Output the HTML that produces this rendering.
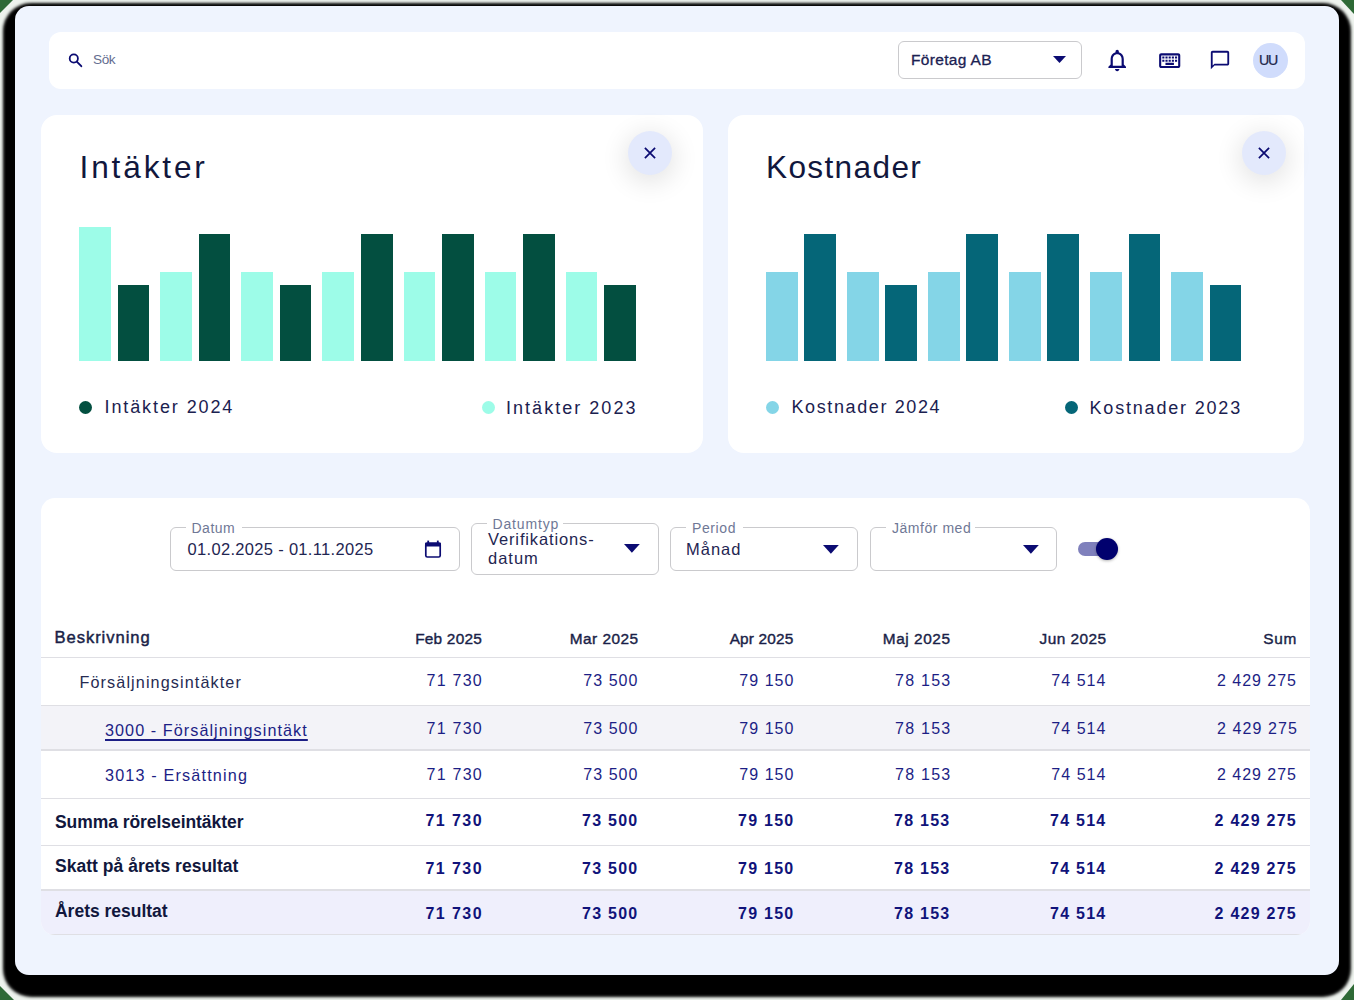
<!DOCTYPE html>
<html><head><meta charset="utf-8"><title>Dashboard</title>
<style>
html,body{margin:0;padding:0;width:1354px;height:1000px;overflow:hidden;background:#eef3ee;}
body{position:relative;font-family:"Liberation Sans",sans-serif;}
.abs{position:absolute;}
.tx{position:absolute;line-height:1;white-space:nowrap;}
#shadow{position:absolute;left:17px;top:8px;width:1320px;height:966px;border-radius:14px;background:#000;box-shadow:0 9px 3px 14px #000;}
#frame{position:absolute;left:15px;top:6px;width:1324px;height:969px;border-radius:14px;background:#eff4fe;}
.card{position:absolute;background:#fff;}
#search{left:49px;top:32px;width:1256px;height:57px;border-radius:12px;}
#card1{left:41px;top:114.5px;width:661.5px;height:338px;border-radius:16px;}
#card2{left:728px;top:114.5px;width:575.5px;height:338px;border-radius:16px;}
#card3{left:41px;top:497.5px;width:1268.5px;height:437px;border-radius:14px;overflow:hidden;}
.bar{position:absolute;}
.g1{background:#9dfce8;}
.g2{background:#034f40;}
.b1{background:#84d5e7;}
.b2{background:#056678;}
.dot{position:absolute;width:13px;height:13px;border-radius:50%;}
.closebtn{position:absolute;width:44px;height:44px;border-radius:50%;background:#e3e9fc;box-shadow:0 5px 26px 3px rgba(0,0,0,0.11);}
.field{position:absolute;border:1.5px solid #cacacd;border-radius:6px;box-sizing:border-box;}
.lblgap{position:absolute;background:#fff;height:4px;}
.row{position:absolute;left:0;width:100%;}
.div{position:absolute;left:0;width:100%;height:1.3px;background:#dfdfe4;}
</style></head>
<body>
<svg class="abs" style="left:0;top:0" width="1354" height="1000">
<polygon points="0,0 13,0 0,13" fill="#2e6a36"/>
<polygon points="1341,0 1354,0 1354,14" fill="#2e6a36"/>
<polygon points="0,986 0,1000 14,1000" fill="#2e6a36"/>
<polygon points="1354,984 1354,1000 1341,1000" fill="#2e6a36"/>
</svg>
<div id="shadow"></div>
<div id="frame"></div>
<div class="card" id="search"></div>
<div class="card" id="card1"></div>
<div class="card" id="card2"></div>
<div class="card" id="card3">
<div class="row" style="top:207.7px;height:44.4px;background:#f3f3f8"></div>
<div class="row" style="top:392.1px;height:44.6px;background:#efeffc"></div>
<div class="div" style="top:159.7px"></div>
<div class="div" style="top:207.5px"></div>
<div class="div" style="top:251.9px"></div>
<div class="div" style="top:300.0px"></div>
<div class="div" style="top:347.4px"></div>
<div class="div" style="top:391.8px"></div>
<div class="div" style="top:436.3px"></div>
</div>
<div class="bar g1" style="left:79.30px;top:227px;width:31.8px;height:133.8px"></div>
<div class="bar g2" style="left:117.60px;top:284.7px;width:31.8px;height:76.1px"></div>
<div class="bar g1" style="left:160.35px;top:272px;width:31.8px;height:88.8px"></div>
<div class="bar g2" style="left:198.65px;top:233.7px;width:31.8px;height:127.1px"></div>
<div class="bar g1" style="left:241.40px;top:272px;width:31.8px;height:88.8px"></div>
<div class="bar g2" style="left:279.70px;top:284.7px;width:31.8px;height:76.1px"></div>
<div class="bar g1" style="left:322.45px;top:272px;width:31.8px;height:88.8px"></div>
<div class="bar g2" style="left:360.75px;top:233.7px;width:31.8px;height:127.1px"></div>
<div class="bar g1" style="left:403.50px;top:272px;width:31.8px;height:88.8px"></div>
<div class="bar g2" style="left:441.80px;top:233.7px;width:31.8px;height:127.1px"></div>
<div class="bar g1" style="left:484.55px;top:272px;width:31.8px;height:88.8px"></div>
<div class="bar g2" style="left:522.85px;top:233.7px;width:31.8px;height:127.1px"></div>
<div class="bar g1" style="left:565.60px;top:272px;width:31.8px;height:88.8px"></div>
<div class="bar g2" style="left:603.90px;top:284.7px;width:31.8px;height:76.1px"></div>
<div class="bar b1" style="left:766.00px;top:272px;width:31.8px;height:88.8px"></div>
<div class="bar b2" style="left:804.30px;top:233.7px;width:31.8px;height:127.1px"></div>
<div class="bar b1" style="left:847.05px;top:272px;width:31.8px;height:88.8px"></div>
<div class="bar b2" style="left:885.35px;top:284.7px;width:31.8px;height:76.1px"></div>
<div class="bar b1" style="left:928.10px;top:272px;width:31.8px;height:88.8px"></div>
<div class="bar b2" style="left:966.40px;top:233.7px;width:31.8px;height:127.1px"></div>
<div class="bar b1" style="left:1009.15px;top:272px;width:31.8px;height:88.8px"></div>
<div class="bar b2" style="left:1047.45px;top:233.7px;width:31.8px;height:127.1px"></div>
<div class="bar b1" style="left:1090.20px;top:272px;width:31.8px;height:88.8px"></div>
<div class="bar b2" style="left:1128.50px;top:233.7px;width:31.8px;height:127.1px"></div>
<div class="bar b1" style="left:1171.25px;top:272px;width:31.8px;height:88.8px"></div>
<div class="bar b2" style="left:1209.55px;top:284.7px;width:31.8px;height:76.1px"></div>
<div class="dot" style="left:79.3px;top:400.7px;background:#034f40"></div>
<div class="dot" style="left:481.6px;top:400.7px;background:#9dfce8"></div>
<div class="dot" style="left:766px;top:400.7px;background:#84d5e7"></div>
<div class="dot" style="left:1065px;top:400.7px;background:#056678"></div>
<svg class="abs" style="left:60px;top:48px" width="30" height="24" viewBox="60 48 30 24"><circle cx="73.8" cy="58.5" r="4.1" fill="none" stroke="#0b0b72" stroke-width="1.8"/><line x1="76.8" y1="61.6" x2="81.3" y2="66.2" stroke="#0b0b72" stroke-width="1.9" stroke-linecap="round"/></svg>
<div class="field" style="left:898.4px;top:41.2px;width:183.6px;height:38.1px;"></div>
<svg class="abs" style="left:1050px;top:53px" width="20" height="14" viewBox="1050 53 20 14"><polygon points="1053,56 1066,56 1059.5,63" fill="#0b0b72"/></svg>
<svg class="abs" style="left:1103.9px;top:47.3px" width="26.4" height="26.4" viewBox="0 0 24 24"><path fill="#0b0b72" d="M12 22c1.1 0 2-.9 2-2h-4c0 1.1.89 2 2 2zm6-6v-5c0-3.07-1.64-5.64-4.5-6.32V4c0-.83-.67-1.5-1.5-1.5s-1.5.67-1.5 1.5v.68C7.63 5.36 6 7.92 6 11v5l-2 2v1h16v-1l-2-2zm-2 1H8v-6c0-2.48 1.51-4.5 4-4.5s4 2.02 4 4.5v6z"/></svg>
<svg class="abs" style="left:1156.7px;top:47.7px" width="25.4" height="25.4" viewBox="0 0 24 24"><path fill="#0b0b72" d="M20 7v10H4V7h16m0-2H4c-1.1 0-1.99.9-1.99 2L2 17c0 1.1.9 2 2 2h16c1.1 0 2-.9 2-2V7c0-1.1-.9-2-2-2zm-9 3h2v2h-2zm0 3h2v2h-2zM8 8h2v2H8zm0 3h2v2H8zm-3 0h2v2H5zm0-3h2v2H5zm3 6h8v2H8zm6-3h2v2h-2zm0-3h2v2h-2zm3 3h2v2h-2zm0-3h2v2h-2z"/></svg>
<svg class="abs" style="left:1208.7px;top:49.3px" width="22" height="22" viewBox="0 0 24 24"><path fill="#0b0b72" d="M20 2H4c-1.1 0-2 .9-2 2v18l4-4h14c1.1 0 2-.9 2-2V4c0-1.1-.9-2-2-2zm0 14H6l-2 2V4h16v12z"/></svg>
<div class="abs" style="left:1252.5px;top:42.7px;width:35px;height:35px;border-radius:50%;background:#d0dcfc"></div>
<div class="closebtn" style="left:628px;top:130.5px"></div>
<svg class="abs" style="left:642px;top:144.5px" width="16" height="16" viewBox="0 0 16 16"><path d="M2.9 2.9L13.1 13.1M13.1 2.9L2.9 13.1" stroke="#0b0b72" stroke-width="1.75"/></svg>
<div class="closebtn" style="left:1241.5px;top:130.5px"></div>
<svg class="abs" style="left:1255.5px;top:144.5px" width="16" height="16" viewBox="0 0 16 16"><path d="M2.9 2.9L13.1 13.1M13.1 2.9L2.9 13.1" stroke="#0b0b72" stroke-width="1.75"/></svg>
<div class="field" style="left:170.2px;top:527.2px;width:289.6px;height:43.6px;"></div>
<div class="lblgap" style="left:186.2px;top:526.2px;width:55.70000000000002px"></div>
<div class="field" style="left:471.3px;top:523.3px;width:187.3px;height:51.8px;"></div>
<div class="lblgap" style="left:487px;top:522.3px;width:76px"></div>
<div class="field" style="left:670.3px;top:527.2px;width:187.4px;height:43.4px;"></div>
<div class="lblgap" style="left:686px;top:526.2px;width:57px"></div>
<div class="field" style="left:869.5px;top:527.2px;width:187.6px;height:43.9px;"></div>
<div class="lblgap" style="left:886px;top:526.2px;width:89px"></div>
<svg class="abs" style="left:420px;top:536px" width="26" height="26" viewBox="420 536 26 26"><rect x="425.8" y="543.3" width="14.4" height="13.7" rx="1.5" fill="none" stroke="#0b0b72" stroke-width="1.7"/><rect x="425" y="542.5" width="16" height="4" rx="1" fill="#0b0b72"/><rect x="427.3" y="540.6" width="1.8" height="3" fill="#0b0b72"/><rect x="436.9" y="540.6" width="1.8" height="3" fill="#0b0b72"/></svg>
<svg class="abs" style="left:622.4px;top:541.8px" width="20" height="13" viewBox="622.4 541.8 20 13"><polygon points="624.4,543.8 640.1999999999999,543.8 632.3,552.5999999999999" fill="#0b0b72"/></svg>
<svg class="abs" style="left:821.4px;top:543px" width="20" height="13" viewBox="821.4 543 20 13"><polygon points="823.4,545 839.1999999999999,545 831.3,553.8" fill="#0b0b72"/></svg>
<svg class="abs" style="left:1020.7px;top:543px" width="20" height="13" viewBox="1020.7 543 20 13"><polygon points="1022.7,545 1038.5,545 1030.6000000000001,553.8" fill="#0b0b72"/></svg>
<div class="abs" style="left:1078.2px;top:542.2px;width:36px;height:13.7px;border-radius:7px;background:#7f80bc"></div>
<div class="abs" style="left:1096px;top:538.2px;width:22px;height:22px;border-radius:50%;background:#01016e;box-shadow:0 1px 3px rgba(0,0,0,0.3)"></div>
<div class="tx" id="sok" style="left:93.00px;top:53.49px;font-size:13.6px;font-weight:400;color:#646d90;letter-spacing:-0.400px;">Sök</div>
<div class="tx" id="foretag" style="left:911.00px;top:52.18px;font-size:15.5px;font-weight:400;color:#1b2152;letter-spacing:0.333px;-webkit-text-stroke:0.3px #1b2152;">Företag AB</div>
<div class="tx" id="uu" style="left:1259.00px;top:53.08px;font-size:14.2px;font-weight:400;color:#1b1f4a;letter-spacing:-1.200px;-webkit-text-stroke:0.2px #1b1f4a;">UU</div>
<div class="tx" id="tit1" style="left:79.50px;top:151.65px;font-size:31.6px;font-weight:400;color:#11173d;letter-spacing:2.857px;">Intäkter</div>
<div class="tx" id="tit2" style="left:766.00px;top:151.65px;font-size:31.6px;font-weight:400;color:#11173d;letter-spacing:1.350px;">Kostnader</div>
<div class="tx" id="lg1" style="left:104.50px;top:398.26px;font-size:18px;font-weight:400;color:#1b2150;letter-spacing:1.900px;">Intäkter 2024</div>
<div class="tx" id="lg2" style="left:506.00px;top:398.76px;font-size:18px;font-weight:400;color:#1b2150;letter-spacing:2.033px;">Intäkter 2023</div>
<div class="tx" id="lg3" style="left:791.50px;top:398.26px;font-size:18px;font-weight:400;color:#1b2150;letter-spacing:1.615px;">Kostnader 2024</div>
<div class="tx" id="lg4" style="left:1089.50px;top:398.76px;font-size:18px;font-weight:400;color:#1b2150;letter-spacing:1.815px;">Kostnader 2023</div>
<div class="tx" id="f1l" style="left:191.50px;top:520.75px;font-size:14px;font-weight:400;color:#6f7896;letter-spacing:0.500px;">Datum</div>
<div class="tx" id="f1v" style="left:187.50px;top:540.63px;font-size:16.5px;font-weight:400;color:#1f2652;letter-spacing:0.318px;">01.02.2025 - 01.11.2025</div>
<div class="tx" id="f2l" style="left:492.50px;top:516.75px;font-size:14px;font-weight:400;color:#6f7896;letter-spacing:0.857px;">Datumtyp</div>
<div class="tx" id="f2v1" style="left:488.00px;top:531.03px;font-size:16.5px;font-weight:400;color:#1f2652;letter-spacing:0.862px;">Verifikations-</div>
<div class="tx" id="f2v2" style="left:488.00px;top:550.43px;font-size:16.5px;font-weight:400;color:#1f2652;letter-spacing:1.000px;">datum</div>
<div class="tx" id="f3l" style="left:692.00px;top:520.75px;font-size:14px;font-weight:400;color:#6f7896;letter-spacing:0.600px;">Period</div>
<div class="tx" id="f3v" style="left:686.00px;top:540.63px;font-size:16.5px;font-weight:400;color:#1f2652;letter-spacing:1.000px;">Månad</div>
<div class="tx" id="f4l" style="left:892.00px;top:520.65px;font-size:14px;font-weight:400;color:#6f7896;letter-spacing:0.533px;">Jämför med</div>
<div class="tx" id="th0" style="left:54.50px;top:629.95px;font-size:16.6px;font-weight:400;color:#1a1f48;letter-spacing:0.940px;-webkit-text-stroke:0.45px #1a1f48;">Beskrivning</div>
<div class="tx" id="th1" style="right:872.00px;top:630.96px;font-size:15.4px;font-weight:400;color:#1a1f48;letter-spacing:0.229px;-webkit-text-stroke:0.4px #1a1f48;">Feb 2025</div>
<div class="tx" id="th2" style="right:715.50px;top:630.96px;font-size:15.4px;font-weight:400;color:#1a1f48;letter-spacing:0.457px;-webkit-text-stroke:0.4px #1a1f48;">Mar 2025</div>
<div class="tx" id="th3" style="right:560.50px;top:630.96px;font-size:15.4px;font-weight:400;color:#1a1f48;letter-spacing:0.171px;-webkit-text-stroke:0.4px #1a1f48;">Apr 2025</div>
<div class="tx" id="th4" style="right:403.50px;top:630.96px;font-size:15.4px;font-weight:400;color:#1a1f48;letter-spacing:0.543px;-webkit-text-stroke:0.4px #1a1f48;">Maj 2025</div>
<div class="tx" id="th5" style="right:247.50px;top:630.96px;font-size:15.4px;font-weight:400;color:#1a1f48;letter-spacing:0.457px;-webkit-text-stroke:0.4px #1a1f48;">Jun 2025</div>
<div class="tx" id="th6" style="right:57.00px;top:630.96px;font-size:15.4px;font-weight:400;color:#1a1f48;letter-spacing:0.700px;-webkit-text-stroke:0.4px #1a1f48;">Sum</div>
<div class="tx" id="r1l" style="left:79.50px;top:674.49px;font-size:16.2px;font-weight:400;color:#262b52;letter-spacing:1.105px;">Försäljningsintäkter</div>
<div class="tx" id="r2l" style="left:105.00px;top:722.39px;font-size:16.2px;font-weight:400;color:#1c1e85;letter-spacing:1.058px;text-decoration:underline;text-decoration-thickness:1.5px;text-underline-offset:3px;">3000 - Försäljningsintäkt</div>
<div class="tx" id="r3l" style="left:105.00px;top:766.89px;font-size:16.2px;font-weight:400;color:#1c1e85;letter-spacing:1.163px;">3013 - Ersättning</div>
<div class="tx" id="r4l" style="left:55.00px;top:813.79px;font-size:17.5px;font-weight:700;color:#11173d;letter-spacing:-0.060px;">Summa rörelseintäkter</div>
<div class="tx" id="r5l" style="left:55.00px;top:858.19px;font-size:17.5px;font-weight:700;color:#11173d;letter-spacing:0.027px;">Skatt på årets resultat</div>
<div class="tx" id="r6l" style="left:55.00px;top:902.69px;font-size:17.5px;font-weight:700;color:#11173d;letter-spacing:-0.015px;">Årets resultat</div>
<div class="tx" id="n0_0" style="right:871.00px;top:673.46px;font-size:16px;font-weight:400;color:#1c1e85;letter-spacing:1.240px;">71 730</div>
<div class="tx" id="n0_1" style="right:715.50px;top:673.46px;font-size:16px;font-weight:400;color:#1c1e85;letter-spacing:1.040px;">73 500</div>
<div class="tx" id="n0_2" style="right:559.50px;top:673.46px;font-size:16px;font-weight:400;color:#1c1e85;letter-spacing:1.040px;">79 150</div>
<div class="tx" id="n0_3" style="right:402.50px;top:673.46px;font-size:16px;font-weight:400;color:#1c1e85;letter-spacing:1.240px;">78 153</div>
<div class="tx" id="n0_4" style="right:247.50px;top:673.46px;font-size:16px;font-weight:400;color:#1c1e85;letter-spacing:1.040px;">74 514</div>
<div class="tx" id="n0_5" style="right:57.00px;top:673.46px;font-size:16px;font-weight:400;color:#1c1e85;letter-spacing:0.975px;">2 429 275</div>
<div class="tx" id="n1_0" style="right:871.00px;top:721.46px;font-size:16px;font-weight:400;color:#1c1e85;letter-spacing:1.240px;">71 730</div>
<div class="tx" id="n1_1" style="right:715.50px;top:721.46px;font-size:16px;font-weight:400;color:#1c1e85;letter-spacing:1.040px;">73 500</div>
<div class="tx" id="n1_2" style="right:559.50px;top:721.46px;font-size:16px;font-weight:400;color:#1c1e85;letter-spacing:1.040px;">79 150</div>
<div class="tx" id="n1_3" style="right:402.50px;top:721.46px;font-size:16px;font-weight:400;color:#1c1e85;letter-spacing:1.240px;">78 153</div>
<div class="tx" id="n1_4" style="right:247.50px;top:721.46px;font-size:16px;font-weight:400;color:#1c1e85;letter-spacing:1.040px;">74 514</div>
<div class="tx" id="n1_5" style="right:56.00px;top:721.46px;font-size:16px;font-weight:400;color:#1c1e85;letter-spacing:1.100px;">2 429 275</div>
<div class="tx" id="n2_0" style="right:871.00px;top:766.96px;font-size:16px;font-weight:400;color:#1c1e85;letter-spacing:1.240px;">71 730</div>
<div class="tx" id="n2_1" style="right:715.50px;top:766.96px;font-size:16px;font-weight:400;color:#1c1e85;letter-spacing:1.040px;">73 500</div>
<div class="tx" id="n2_2" style="right:559.50px;top:766.96px;font-size:16px;font-weight:400;color:#1c1e85;letter-spacing:1.040px;">79 150</div>
<div class="tx" id="n2_3" style="right:402.50px;top:766.96px;font-size:16px;font-weight:400;color:#1c1e85;letter-spacing:1.240px;">78 153</div>
<div class="tx" id="n2_4" style="right:247.50px;top:766.96px;font-size:16px;font-weight:400;color:#1c1e85;letter-spacing:1.040px;">74 514</div>
<div class="tx" id="n2_5" style="right:57.00px;top:766.96px;font-size:16px;font-weight:400;color:#1c1e85;letter-spacing:0.975px;">2 429 275</div>
<div class="tx" id="nb0_0" style="right:871.00px;top:813.36px;font-size:16px;font-weight:700;color:#10137a;letter-spacing:1.440px;">71 730</div>
<div class="tx" id="nb0_1" style="right:715.50px;top:813.36px;font-size:16px;font-weight:700;color:#10137a;letter-spacing:1.240px;">73 500</div>
<div class="tx" id="nb0_2" style="right:559.50px;top:813.36px;font-size:16px;font-weight:700;color:#10137a;letter-spacing:1.240px;">79 150</div>
<div class="tx" id="nb0_3" style="right:403.50px;top:813.36px;font-size:16px;font-weight:700;color:#10137a;letter-spacing:1.240px;">78 153</div>
<div class="tx" id="nb0_4" style="right:247.50px;top:813.36px;font-size:16px;font-weight:700;color:#10137a;letter-spacing:1.240px;">74 514</div>
<div class="tx" id="nb0_5" style="right:57.00px;top:813.36px;font-size:16px;font-weight:700;color:#10137a;letter-spacing:1.250px;">2 429 275</div>
<div class="tx" id="nb1_0" style="right:871.00px;top:861.26px;font-size:16px;font-weight:700;color:#10137a;letter-spacing:1.440px;">71 730</div>
<div class="tx" id="nb1_1" style="right:715.50px;top:861.26px;font-size:16px;font-weight:700;color:#10137a;letter-spacing:1.240px;">73 500</div>
<div class="tx" id="nb1_2" style="right:559.50px;top:861.26px;font-size:16px;font-weight:700;color:#10137a;letter-spacing:1.240px;">79 150</div>
<div class="tx" id="nb1_3" style="right:403.50px;top:861.26px;font-size:16px;font-weight:700;color:#10137a;letter-spacing:1.240px;">78 153</div>
<div class="tx" id="nb1_4" style="right:247.50px;top:861.26px;font-size:16px;font-weight:700;color:#10137a;letter-spacing:1.240px;">74 514</div>
<div class="tx" id="nb1_5" style="right:57.00px;top:861.26px;font-size:16px;font-weight:700;color:#10137a;letter-spacing:1.250px;">2 429 275</div>
<div class="tx" id="nb2_0" style="right:871.00px;top:905.66px;font-size:16px;font-weight:700;color:#10137a;letter-spacing:1.440px;">71 730</div>
<div class="tx" id="nb2_1" style="right:715.50px;top:905.66px;font-size:16px;font-weight:700;color:#10137a;letter-spacing:1.240px;">73 500</div>
<div class="tx" id="nb2_2" style="right:559.50px;top:905.66px;font-size:16px;font-weight:700;color:#10137a;letter-spacing:1.240px;">79 150</div>
<div class="tx" id="nb2_3" style="right:403.50px;top:905.66px;font-size:16px;font-weight:700;color:#10137a;letter-spacing:1.240px;">78 153</div>
<div class="tx" id="nb2_4" style="right:247.50px;top:905.66px;font-size:16px;font-weight:700;color:#10137a;letter-spacing:1.240px;">74 514</div>
<div class="tx" id="nb2_5" style="right:57.00px;top:905.66px;font-size:16px;font-weight:700;color:#10137a;letter-spacing:1.250px;">2 429 275</div>
</body></html>
